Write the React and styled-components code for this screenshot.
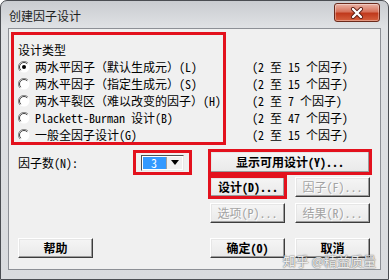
import styled, { createGlobalStyle } from 'styled-components';

const FONT = '"Noto Sans Mono CJK SC", "Noto Sans CJK SC", sans-serif';
const MARK = '#e3111d';

const GlobalStyle = createGlobalStyle`
  body {
    margin: 0;
    background: #fff;
    font-family: ${FONT};
  }
`;

const Window = styled.div`
  width: 389px;
  height: 280px;
  box-sizing: border-box;
  border: 1px solid #4a4d52;
  border-radius: 7px 7px 0 0;
  background: linear-gradient(#c9ccd0 0px, #dfe1e4 26px, #d9dbde 100%);
  padding: 0 7px 9px;
  display: flex;
  flex-direction: column;
  position: relative;
  overflow: hidden;
`;

const TitleBar = styled.div`
  height: 27px;
  display: flex;
  align-items: flex-start;
  padding-left: 1px;
`;

const Title = styled.div`
  font-size: 12px;
  line-height: 12px;
  color: #1e1e1e;
  margin-top: 9px;
  white-space: nowrap;
`;

const CloseButton = styled.div`
  margin-left: auto;
  margin-right: 1px;
  margin-top: 2px;
  width: 46px;
  height: 19px;
  box-sizing: border-box;
  border: 1px solid #6b2a1c;
  border-radius: 3px;
  background: linear-gradient(#eab3a5 0%, #d7735c 45%, #c0391c 55%, #d6613f 100%);
  box-shadow: inset 0 0 0 1px rgba(255, 255, 255, 0.35);
  display: flex;
  align-items: center;
  justify-content: center;
`;

const Client = styled.div`
  flex: 1;
  border: 1px solid #8d9096;
  background: #f0f0f0;
  padding: 3px 0 0 2px;
  font-size: 12px;
  color: #000;
  display: flex;
  flex-direction: column;
`;

const TopSection = styled.div`
  display: flex;
  height: 113px;
`;

const TypeBox = styled.div`
  width: 215px;
  height: 113px;
  box-sizing: border-box;
  border: 3px solid ${MARK};
  padding: 6px 0 0 4px;
`;

const GroupTitle = styled.div`
  line-height: 17px;
  height: 17px;
`;

const RadioRow = styled.div`
  display: flex;
  align-items: center;
  height: 17px;
  line-height: 17px;
  white-space: nowrap;
`;

const RadioLabel = styled.span`
  margin-left: 5px;
`;

const RangeList = styled.div`
  margin-left: 26px;
  padding-top: 26px;
`;

const RangeRow = styled.div`
  height: 17px;
  line-height: 17px;
  white-space: nowrap;
`;

const LowerSection = styled.div`
  display: flex;
  margin-top: 5px;
`;

const LeftColumn = styled.div`
  width: 199px;
  padding-left: 7px;
  box-sizing: border-box;
  display: flex;
  flex-direction: column;
`;

const CountRow = styled.div`
  display: flex;
  align-items: center;
  height: 25px;
`;

const CountLabel = styled.span`
  width: 115px;
  white-space: nowrap;
`;

const DropMark = styled.div`
  width: 59px;
  height: 25px;
  box-sizing: border-box;
  border: 3px solid ${MARK};
  display: flex;
  align-items: center;
  padding-left: 5px;
`;

const Combo = styled.div`
  width: 43px;
  height: 16px;
  box-sizing: border-box;
  border: 1px solid;
  border-color: #505050 #e8e8e8 #e8e8e8 #505050;
  background: #fff;
  display: flex;
  padding: 1px;
`;

const ComboValue = styled.div`
  flex: 1;
  background: #3399ff;
  color: #fff;
  font-size: 12px;
  line-height: 12px;
  padding-left: 8px;
`;

const ComboArrow = styled.div`
  width: 15px;
  background: #f0f0f0;
  border-left: 1px solid #a0a0a0;
  display: flex;
  align-items: center;
  justify-content: center;
`;

const RightColumn = styled.div`
  width: 160px;
  display: flex;
  flex-direction: column;
`;

const ButtonRow = styled.div`
  display: flex;
  justify-content: space-between;
  margin-top: ${({ $gap }) => $gap}px;
`;

const Button = styled.div`
  width: ${({ $wide }) => ($wide ? '160px' : '75px')};
  height: ${({ $wide }) => ($wide ? '22px' : '20px')};
  box-sizing: border-box;
  margin-top: ${({ $top }) => $top || 0}px;
  border: 1px solid;
  border-color: #ffffff #3c3c3c #3c3c3c #ffffff;
  box-shadow: inset -1px -1px #9c9c9c, inset 1px 1px #e6e6e6;
  background: linear-gradient(#f5f5f5, #e9e9e9);
  display: flex;
  align-items: center;
  justify-content: ${({ $left }) => ($left ? 'flex-start' : 'center')};
  padding-left: ${({ $left }) => ($left ? '7px' : '0')};
  white-space: nowrap;
  font-size: 12px;
  line-height: 12px;
  color: ${({ $disabled }) => ($disabled ? '#a3a3a3' : '#000')};
  text-shadow: ${({ $disabled }) => ($disabled ? '1px 1px #ffffff' : 'none')};
  font-weight: ${({ $strong }) => ($strong ? 600 : 400)};
  outline: ${({ $marked }) => ($marked ? `3px solid ${MARK}` : 'none')};
  outline-offset: -1px;
`;

const Watermark = styled.div`
  position: absolute;
  right: 12px;
  bottom: 12px;
  font-family: "Noto Sans CJK SC", sans-serif;
  font-size: 13px;
  line-height: 12px;
  color: rgba(255, 255, 255, 0.9);
  text-shadow: 0 0 1px #555, 0 0 2px rgba(0, 0, 0, 0.45);
  white-space: nowrap;
`;

const Radio = ({ checked }) => (
  <svg width="12" height="12" viewBox="0 0 12 12">
    <circle cx="6" cy="6" r="5.5" fill="#fff" />
    <path d="M10 2 A5.5 5.5 0 0 0 2 10" fill="none" stroke="#8a8a8a" strokeWidth="1" />
    <path d="M9.2 2.8 A4.5 4.5 0 0 0 2.8 9.2" fill="none" stroke="#404040" strokeWidth="1" />
    {checked && <circle cx="6" cy="6" r="2" fill="#000" />}
  </svg>
);

const types = [
  { label: '两水平因子（默认生成元）(L)', range: '(2 至 15 个因子)', checked: true },
  { label: '两水平因子（指定生成元）(S)', range: '(2 至 15 个因子)' },
  { label: '两水平裂区（难以改变的因子）(H)', range: '(2 至 7 个因子)' },
  { label: 'Plackett-Burman 设计(B)', range: '(2 至 47 个因子)' },
  { label: '一般全因子设计(G)', range: '(2 至 15 个因子)' },
];

export default function App() {
  return (
    <>
      <GlobalStyle />
      <Window>
        <TitleBar>
          <Title>创建因子设计</Title>
          <CloseButton>
            <svg width="14" height="12" viewBox="0 0 14 12">
              <path d="M3 2 L11 10 M11 2 L3 10" stroke="#5a1a10" strokeWidth="4" strokeLinecap="round" />
              <path d="M3 2 L11 10 M11 2 L3 10" stroke="#ffffff" strokeWidth="2.4" strokeLinecap="round" />
            </svg>
          </CloseButton>
        </TitleBar>
        <Client>
          <TopSection>
            <TypeBox>
              <GroupTitle>设计类型</GroupTitle>
              {types.map((t) => (
                <RadioRow key={t.label}>
                  <Radio checked={t.checked} />
                  <RadioLabel>{t.label}</RadioLabel>
                </RadioRow>
              ))}
            </TypeBox>
            <RangeList>
              {types.map((t, i) => (
                <RangeRow key={i}>{t.range}</RangeRow>
              ))}
            </RangeList>
          </TopSection>
          <LowerSection>
            <LeftColumn>
              <CountRow>
                <CountLabel>因子数(N):</CountLabel>
                <DropMark>
                  <Combo>
                    <ComboValue>3</ComboValue>
                    <ComboArrow>
                      <svg width="8" height="5" viewBox="0 0 8 5">
                        <path d="M0 0 H8 L4 5 Z" fill="#000" />
                      </svg>
                    </ComboArrow>
                  </Combo>
                </DropMark>
              </CountRow>
              <Button $top={63} $strong>帮助</Button>
            </LeftColumn>
            <RightColumn>
              <Button $wide $marked $top={1} $strong>显示可用设计(Y)...</Button>
              <ButtonRow $gap={4}>
                <Button $marked $left $strong>设计(D)...</Button>
                <Button $disabled>因子(F)...</Button>
              </ButtonRow>
              <ButtonRow $gap={6}>
                <Button $disabled>选项(P)...</Button>
                <Button $disabled>结果(R)...</Button>
              </ButtonRow>
              <ButtonRow $gap={15}>
                <Button $strong>确定(O)</Button>
                <Button $strong>取消</Button>
              </ButtonRow>
            </RightColumn>
          </LowerSection>
        </Client>
        <Watermark>知乎 @精益质量</Watermark>
      </Window>
    </>
  );
}
